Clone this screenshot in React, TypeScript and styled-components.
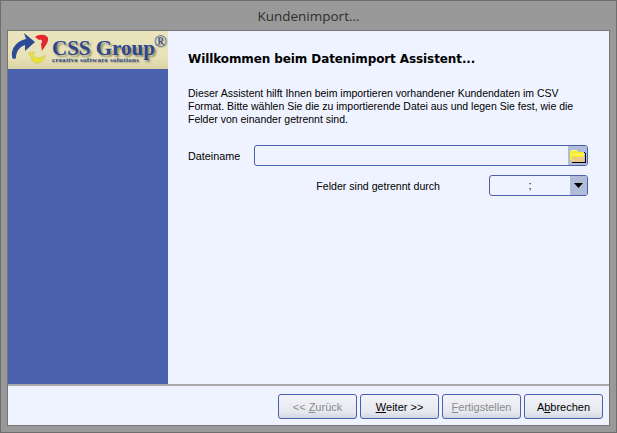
import React from 'react';
import styled, { createGlobalStyle } from 'styled-components';

const GlobalStyle = createGlobalStyle`
  html, body {
    margin: 0;
    padding: 0;
    width: 617px;
    height: 433px;
    overflow: hidden;
    background: #999999;
  }
`;

const WindowFrame = styled.div`
  box-sizing: border-box;
  width: 617px;
  height: 433px;
  display: flex;
  flex-direction: column;
  background: #999999;
  border: 1px solid #6e6e6e;
  padding: 0 7px 7px 7px;
  font-family: "Liberation Sans", Arial, sans-serif;
  font-size: 11px;
  color: #000;
`;

const TitleBar = styled.div`
  height: 30px;
  display: flex;
  align-items: center;
  justify-content: center;
  font-family: "Open Sans", "Noto Sans", sans-serif;
  font-size: 13.5px;
  color: #2f2f2f;
`;

const Client = styled.div`
  flex: 1;
  display: flex;
  flex-direction: column;
  background: #eff3ff;
  box-shadow: 0 0 0 1px #777777;
  min-height: 0;
`;

const Main = styled.div`
  flex: 1;
  display: flex;
  min-height: 0;
`;

const Sidebar = styled.div`
  width: 160px;
  flex: none;
  display: flex;
  flex-direction: column;
  background: #4a60ac;
`;

const Logo = styled.div`
  height: 38px;
  position: relative;
  display: flex;
  align-items: flex-start;
  padding-left: 3px;
  background: linear-gradient(180deg, #e9e4bd 0%, #e8e2b8 70%, #d9d2a5 100%);
  overflow: hidden;
`;

const LogoText = styled.div`
  display: flex;
  flex-direction: column;
  margin-left: -2px;
`;

const LogoName = styled.div`
  font-family: "Liberation Serif", "Times New Roman", serif;
  font-weight: bold;
  font-size: 21px;
  line-height: 18px;
  margin-top: 8px;
  color: #2c4790;
  white-space: nowrap;
  text-shadow: 2px 2px 2px rgba(70, 65, 40, 0.55);
`;

const LogoTag = styled.div`
  font-family: "Liberation Serif", "Times New Roman", serif;
  font-weight: bold;
  font-size: 7px;
  line-height: 6px;
  letter-spacing: 0.3px;
  color: #2c4790;
  white-space: nowrap;
  text-shadow: 1px 1px 1px rgba(70, 65, 40, 0.4);
`;

const Registered = styled.span`
  position: absolute;
  top: 3px;
  right: 1px;
  font-family: "Liberation Serif", serif;
  font-size: 17px;
  line-height: 15px;
  font-weight: normal;
  color: #2c4790;
  text-shadow: 1px 1px 1px rgba(70, 65, 40, 0.45);
`;

const Content = styled.div`
  flex: 1;
  display: flex;
  flex-direction: column;
  padding: 20px 21px 0 20px;
`;

const Heading = styled.div`
  font-family: "DejaVu Sans", Verdana, sans-serif;
  font-weight: bold;
  font-size: 12px;
  line-height: 16px;
  letter-spacing: -0.1px;
  white-space: nowrap;
`;

const Intro = styled.p`
  margin: 20px 0 0 0;
  line-height: 13px;
  font-size: 10.5px;
  white-space: nowrap;
`;

const FileRow = styled.div`
  display: flex;
  align-items: center;
  margin-top: 19px;
`;

const FieldLabel = styled.div`
  width: 66px;
  flex: none;
  font-size: 10.8px;
`;

const Field = styled.div<{ $width?: number }>`
  box-sizing: border-box;
  height: 21px;
  flex: ${(p) => (p.$width ? 'none' : '1')};
  width: ${(p) => (p.$width ? `${p.$width}px` : 'auto')};
  display: flex;
  border: 1px solid #4a60ac;
  border-radius: 3px;
  background: #eff3ff;
  overflow: hidden;
`;

const FieldValue = styled.div`
  flex: 1;
  text-align: center;
  line-height: 18px;
  font-size: 11px;
`;

const FieldButton = styled.div<{ $width: number }>`
  width: ${(p) => p.$width}px;
  flex: none;
  display: flex;
  align-items: center;
  justify-content: center;
  background: #b1bcd8;
`;

const SeparatorRow = styled.div`
  display: flex;
  align-items: center;
  justify-content: flex-end;
  margin-top: 9px;
`;

const SeparatorLabel = styled.div`
  margin-right: 49px;
  font-size: 10.6px;
`;

const Footer = styled.div`
  height: 41px;
  flex: none;
  box-sizing: border-box;
  border-top: 2px solid #a9a9a9;
  display: flex;
  justify-content: flex-end;
  gap: 3px;
  padding: 8px 6px 0 0;
`;

const WizardButton = styled.div<{ $disabled?: boolean }>`
  box-sizing: border-box;
  width: 79px;
  height: 25px;
  display: flex;
  align-items: center;
  justify-content: center;
  white-space: pre;
  border: 1px solid #4a60ac;
  border-radius: 3px;
  background: linear-gradient(180deg, #f3f4f8 0%, #e6e8f0 75%, #d3d6e0 100%);
  font-size: 11px;
  color: ${(p) => (p.$disabled ? '#8b8b8b' : '#000')};
`;

const FolderIcon = () => (
  <svg width="16" height="14" viewBox="0 0 16 14" shapeRendering="crispEdges">
    <path d="M0 2 H1 V1 H7 V2 H8 V3 H14 V12 H1 V11 H0 Z" fill="#f7ef2e" />
    <path d="M1 1 H7 V2 H1 Z" fill="#fbf680" />
    <path d="M2 8 H14 V13 H2 Z" fill="#ecc98a" />
    <path d="M0 5 H14 V6 H0 Z" fill="#fbf680" />
    <path d="M14 3 H15 V4 H16 V14 H2 V13 H15 V4 H14 Z" fill="#000" />
  </svg>
);

const ArrowDown = () => (
  <svg width="9" height="5" viewBox="0 0 9 5">
    <path d="M0 0 H9 L4.5 5 Z" fill="#000" />
  </svg>
);

const LogoArrows = () => (
  <svg width="43" height="34" viewBox="0 0 43 34" style={{ flex: 'none', marginTop: 1 }}>
    <path d="M1 24 C0 17 5 9 15 7 L13 1 L24 10 L14 19 L14 13 C8 15 5 20 5 26 C3 28 1 27 1 24 Z" fill="#2d4a97" />
    <path d="M24 5 C28 2 35 2 37 6 C38 10 34 14 31 19 L30 12 C32 9 31 7 28 8 Z" fill="#e2262b" />
    <path d="M17 21 L24 20 L22 23 C24 27 30 27 34 23 C34 28 29 32 25 31 C21 30 20 27 20 25 Z" fill="#eae23a" stroke="#a8a24a" strokeWidth="0.3" />
  </svg>
);

const App: React.FC = () => {
  return (
    <WindowFrame>
      <GlobalStyle />
      <TitleBar>Kundenimport...</TitleBar>
      <Client>
        <Main>
          <Sidebar>
            <Logo>
              <LogoArrows />
              <LogoText>
                <LogoName>CSS Group</LogoName>
                <LogoTag>creative software solutions</LogoTag>
              </LogoText>
              <Registered>®</Registered>
            </Logo>
          </Sidebar>
          <Content>
            <Heading>Willkommen beim Datenimport Assistent...</Heading>
            <Intro>
              Dieser Assistent hilft Ihnen beim importieren vorhandener Kundendaten im CSV
              <br />
              Format. Bitte wählen Sie die zu importierende Datei aus und legen Sie fest, wie die
              <br />
              Felder von einander getrennt sind.
            </Intro>
            <FileRow>
              <FieldLabel>Dateiname</FieldLabel>
              <Field>
                <FieldValue />
                <FieldButton $width={19}>
                  <FolderIcon />
                </FieldButton>
              </Field>
            </FileRow>
            <SeparatorRow>
              <SeparatorLabel>Felder sind getrennt durch</SeparatorLabel>
              <Field $width={99}>
                <FieldValue>;</FieldValue>
                <FieldButton $width={17}>
                  <ArrowDown />
                </FieldButton>
              </Field>
            </SeparatorRow>
          </Content>
        </Main>
        <Footer>
          <WizardButton $disabled>
            {'<< '}<u>Z</u>urück
          </WizardButton>
          <WizardButton>
            <u>W</u>eiter {'>>'}
          </WizardButton>
          <WizardButton $disabled>
            <u>F</u>ertigstellen
          </WizardButton>
          <WizardButton>
            A<u>b</u>brechen
          </WizardButton>
        </Footer>
      </Client>
    </WindowFrame>
  );
};

export default App;
